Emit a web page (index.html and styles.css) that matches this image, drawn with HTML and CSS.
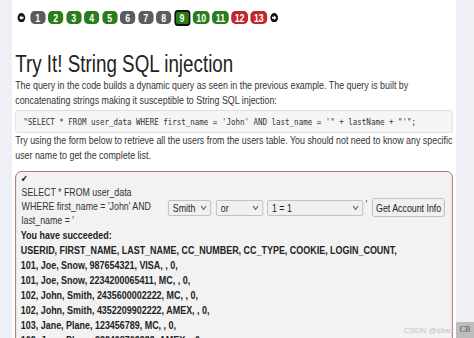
FILE: index.html
```html
<!DOCTYPE html>
<html lang="en">
<head>
  <meta charset="UTF-8" />
  <title>Try It! String SQL injection</title>
  <link rel="stylesheet" href="styles.css">
</head>
<body>

<div class="page">
  <div class="side left"></div>

  <div class="main">
    <div class="content">
      <div class="lesson-nav">
        <svg class="arrow" viewBox="0 0 10 10"><circle cx="5" cy="5" r="5" fill="#111"/><path d="M2.2 5 L5 2.4 V4 H7.8 V6 H5 V7.6 Z" fill="#fff"/></svg>
        <span class="pg gray">1</span>
        <span class="pg green">2</span>
        <span class="pg green">3</span>
        <span class="pg green">4</span>
        <span class="pg green">5</span>
        <span class="pg gray">6</span>
        <span class="pg gray">7</span>
        <span class="pg gray">8</span>
        <span class="pg green current">9</span>
        <span class="pg green wide">10</span>
        <span class="pg green wide">11</span>
        <span class="pg red wide">12</span>
        <span class="pg red wide">13</span>
        <svg class="arrow next" viewBox="0 0 10 10"><circle cx="5" cy="5" r="5" fill="#111"/><path d="M7.8 5 L5 2.4 V4 H2.2 V6 H5 V7.6 Z" fill="#fff"/></svg>
      </div>

      <h2>Try It! String SQL injection</h2>
      <p>The query in the code builds a dynamic query as seen in the previous example. The query is built by concatenating strings making it susceptible to String SQL injection:</p>

      <pre class="code">"SELECT * FROM user_data WHERE first_name = 'John' AND last_name = '" + lastName + "'";</pre>

      <p>Try using the form below to retrieve all the users from the users table. You should not need to know any specific user name to get the complete list.</p>

      <div class="attack">
        <div class="check">&#10004;</div>
        <form class="attack-form">
          <div class="query">SELECT * FROM user_data<br>WHERE first_name = 'John' AND<br>last_name = '</div>
          <div class="select s1">Smith <span class="chev"></span></div>
          <div class="select s2">or <span class="chev"></span></div>
          <div class="select s3">1 = 1 <span class="chev"></span></div>
          <span class="quote">'</span>
          <button type="button">Get Account Info</button>
        </form>
        <div class="output">
          You have succeeded:<br>
          USERID, FIRST_NAME, LAST_NAME, CC_NUMBER, CC_TYPE, COOKIE, LOGIN_COUNT,<br>
          101, Joe, Snow, 987654321, VISA, , 0,<br>
          101, Joe, Snow, 2234200065411, MC, , 0,<br>
          102, John, Smith, 2435600002222, MC, , 0,<br>
          102, John, Smith, 4352209902222, AMEX, , 0,<br>
          103, Jane, Plane, 123456789, MC, , 0,<br>
          103, Jane, Plane, 333498703333, AMEX, , 0,<br>
          10312, Jolly, Hershey, 176896789, MC, , 0,
        </div>
      </div>
    </div>
  </div>

  <div class="side right"></div>
</div>

<div class="mark">CSDN @sliwz<span class="cb">CB</span></div>

</body>
</html>
```

FILE: styles.css
```css
* { margin: 0; padding: 0; box-sizing: border-box; }
body, html { height: 100%; overflow: hidden; }
body { font-family: 'Liberation Sans', Arial, sans-serif; color: #222; background: #fff; }

.page {
  display: flex;
  height: 100%;
}

.side { background: #eef0f6; flex: none; }
.side.left { width: 12px; }
.side.right { width: 18px; }

/* the screenshot is squeezed sideways, so the column is too */
.main {
  flex: 1;
  overflow: hidden;
  background: #fff;
}
.content {
  width: 555px;
  padding: 10px 4px 0 4px;
  transform: scaleX(0.8);
  transform-origin: 0 0;
}

.lesson-nav {
  display: flex;
  align-items: center;
  height: 15px;
  padding-left: 2px;
}

.arrow {
  width: 11.5px;
  height: 9.5px;
  margin-right: 5px;
}
.arrow.next { margin-left: 0; margin-right: 0; }

.pg {
  display: inline-flex;
  align-items: center;
  justify-content: center;
  width: 19px;
  height: 13px;
  margin-right: 3.5px;
  border-radius: 5px;
  color: #fff;
  font-size: 11px;
  font-weight: bold;
}
.pg.wide { width: 21px; margin-right: 3px; }
.pg.gray { background: #5c5c5c; }
.pg.green { background: #2b7d1c; }
.pg.red { background: #c1272d; }
.pg.current {
  width: 20px;
  height: 16px;
  border: 2px solid #111;
  border-radius: 4px;
}

h2 {
  font-size: 23.5px;
  line-height: 27px;
  font-weight: normal;
  margin-top: 26px;
  margin-bottom: 0;
  color: #222;
}

p {
  font-size: 11.1px;
  line-height: 15px;
  color: #333;
  margin-right: -8px;
}

.code {
  height: 23px;
  margin: 2px 0 0 0;
  padding: 5px 9px;
  background: #f5f5f5;
  border: 1px solid #ddd;
  border-radius: 3px;
  font-family: 'DejaVu Sans Mono', 'Liberation Mono', monospace;
  font-size: 9.4px;
  line-height: 11px;
  color: #333;
}

.attack {
  margin-top: 8px;
  border: 1px solid #a8665e;
  border-radius: 7px;
  background: #f2f2f2;
  padding: 1px 0 0 6px;
  height: 200px;
}

.check {
  font-size: 10px;
  line-height: 12px;
  color: #111;
}

.attack-form {
  display: flex;
  align-items: flex-start;
  font-size: 11px;
  color: #333;
}

.query {
  padding-left: 1px;
  width: 184px;
  line-height: 14.2px;
  white-space: nowrap;
  flex: none;
}

.select {
  display: flex;
  justify-content: space-between;
  align-items: center;
  flex: none;
  height: 16px;
  margin-top: 15px;
  padding: 0 6px 0 5px;
  border: 1px solid #bbb;
  border-radius: 2px;
  background: #f0f0f0;
  font-size: 11px;
  color: #222;
}
.s1 { width: 54px; margin-right: 6px; }
.s2 { width: 59px; margin-right: 5px; }
.s3 { width: 120px; margin-right: 3px; }

.chev {
  width: 5px;
  height: 5px;
  border-right: 1px solid #444;
  border-bottom: 1px solid #444;
  transform: rotate(45deg);
  margin-top: -3px;
}

.quote { margin-right: 6px; margin-top: 13px; }

button {
  height: 19px;
  margin-top: 13px;
  padding: 0 4px;
  border: 1px solid #bbb;
  border-radius: 3px;
  background: #f0f0f0;
  font-family: 'Liberation Sans', Arial, sans-serif;
  font-size: 11px;
  color: #222;
  flex: none;
}

.output {
  font-size: 11.2px;
  font-weight: bold;
  line-height: 15px;
  color: #222;
  white-space: nowrap;
}

.mark {
  position: absolute;
  right: 0;
  bottom: 0;
  display: flex;
  align-items: center;
  gap: 2px;
  font-size: 8px;
  color: #c4c4c4;
}
.cb {
  display: inline-block;
  width: 18px;
  height: 16px;
  line-height: 16px;
  text-align: center;
  background: #bdbdbd;
  color: #555;
  font-family: 'Liberation Serif', serif;
}
```
